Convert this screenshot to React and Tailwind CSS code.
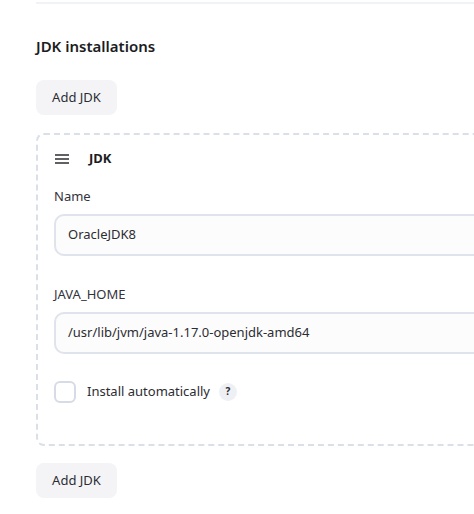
import React, { useState } from 'react';

const font = { fontFamily: '"Noto Sans", "Open Sans", sans-serif' };

const AddButton = () => (
  <button className="h-[35px] w-[81px] rounded-[8px] bg-[#f4f4f7] text-[13px] text-[#2c2c33]">
    Add JDK
  </button>
);

const Field = ({ label, value }) => (
  <div className="flex flex-col">
    <label className="text-[13px] leading-[18px] text-[#33333b]">{label}</label>
    <div className="mt-[9px] flex h-[42px] w-[480px] items-center rounded-[10px] border-2 border-[#dfe3ec] bg-[#fcfcfc] px-[12px] text-[13px] text-[#2c2c33]">
      {value}
    </div>
  </div>
);

const App = () => {
  const [auto, setAuto] = useState(false);

  return (
    <div className="h-[514px] w-[474px] overflow-hidden bg-white pl-[36px]" style={font}>
      <div className="mt-[2px] h-[2px] w-[460px] bg-[#f1f2f6]" />

      <h3 className="mt-[32px] text-[15px] font-semibold leading-[20px] text-[#1c1c22]">JDK installations</h3>

      <div className="mt-[24px]">
        <AddButton />
      </div>

      <div className="mt-[18px] h-[313px] w-[480px] rounded-[8px] border-2 border-dashed border-[#dadfe8] pl-[16px] pt-[14px]">
        <div className="flex items-center gap-[20px]">
          <svg width="14" height="10" viewBox="0 0 14 10" className="ml-[1px]">
            <path d="M0 1h14M0 5h14M0 9h14" stroke="#2c2c33" strokeWidth="1.6" />
          </svg>
          <span className="text-[13px] font-bold text-[#1c1c22]">JDK</span>
        </div>

        <div className="mt-[18px]">
          <Field label="Name" value="OracleJDK8" />
        </div>

        <div className="mt-[29px]">
          <Field label="JAVA_HOME" value="/usr/lib/jvm/java-1.17.0-openjdk-amd64" />
        </div>

        <label className="mt-[27px] flex items-center text-[13px] text-[#2c2c33]">
          <input
            type="checkbox"
            checked={auto}
            onChange={(e) => setAuto(e.target.checked)}
            className="h-[22px] w-[22px] appearance-none rounded-[6px] border-2 border-[#d6dbe5] bg-white"
          />
          <span className="ml-[11px]">Install automatically</span>
          <span className="ml-[9px] flex h-[18px] w-[18px] items-center justify-center rounded-full bg-[#eef0f4] text-[10px] font-bold text-[#2c2c33]">
            ?
          </span>
        </label>
      </div>

      <div className="mt-[17px]">
        <AddButton />
      </div>
    </div>
  );
};

export default App;
